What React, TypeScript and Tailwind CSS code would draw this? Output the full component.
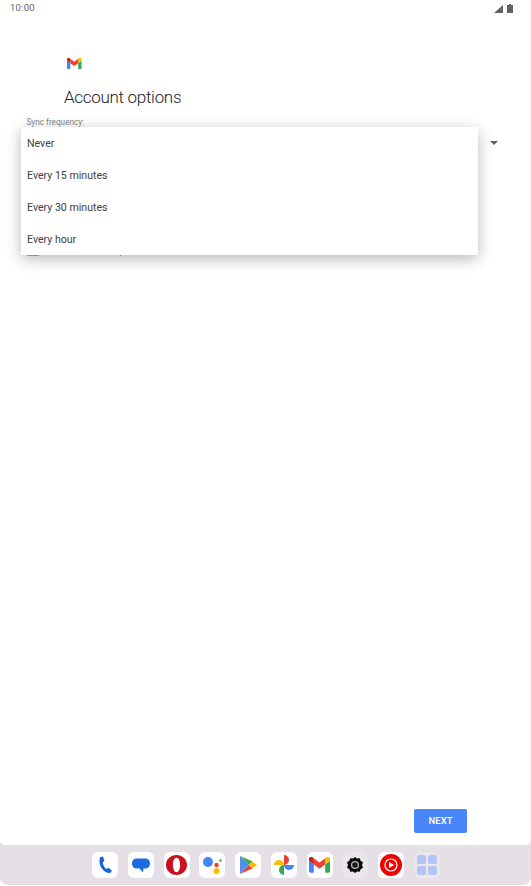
import type { ReactNode } from "react";

const GmailMark = ({ size = 16 }: { size?: number }) => (
  <svg width={size} height={size * 0.75} viewBox="0 0 24 18">
    <path d="M1.6 18H5.5V8.5L0 4.4V16.4C0 17.3.7 18 1.6 18Z" fill="#4285f4" />
    <path d="M18.5 18H22.4C23.3 18 24 17.3 24 16.4V4.4L18.5 8.5Z" fill="#34a853" />
    <path d="M18.5 1.4V8.5L24 4.4V2.2C24 .2 21.7-1 20.1.2Z" fill="#fbbc04" />
    <path d="M5.5 8.5V1.4L12 6.3L18.5 1.4V8.5L12 13.4Z" fill="#ea4335" />
    <path d="M0 2.2V4.4L5.5 8.5V1.4L3.9.2C2.3-1 0 .2 0 2.2Z" fill="#c5221f" />
  </svg>
);

const PhoneIcon = () => (
  <svg width="16" height="18" viewBox="0 0 16 18">
    <path
      d="M3 1.2 6 .6 7.4 5 5.6 6.6C6 9 7.4 11.6 9.4 13L11.6 11.8 15 14.8 13.2 17C7.4 17.6 .4 10 3 1.2Z"
      fill="#1a62d6"
    />
  </svg>
);

const MessagesIcon = () => (
  <svg width="20" height="18" viewBox="0 0 20 18">
    <path
      d="M5.5 2.5H14.5C20.5 2.5 20.5 12.5 14.5 12.5H12.5L12 16.5 8.5 12.5H5.5C-.5 12.5-.5 2.5 5.5 2.5Z"
      fill="#1a6de0"
    />
  </svg>
);

const OperaIcon = () => (
  <svg width="21" height="20" viewBox="0 0 21 20">
    <path
      fillRule="evenodd"
      d="M10.5 0C16.4 0 21 4.4 21 10S16.4 20 10.5 20 0 15.600 0 10 4.600 0 10.500 0ZM10.500 2.800C8.300 2.800 6.900 6 6.900 10S8.300 17.200 10.500 17.200 14.100 14 14.100 10 12.700 2.800 10.500 2.800Z"
      fill="#cc1020"
    />
  </svg>
);

const AssistantIcon = () => (
  <svg width="20" height="20" viewBox="0 0 20 20">
    <circle cx="6" cy="7" r="5" fill="#4285f4" />
    <circle cx="14.5" cy="10" r="2.2" fill="#ea4335" />
    <circle cx="14.5" cy="16" r="3" fill="#fbbc04" />
    <circle cx="18.5" cy="5.5" r="1.2" fill="#34a853" />
  </svg>
);

const PlayIcon = () => (
  <svg width="18" height="20" viewBox="0 0 18 20">
    <path d="M1 1V10H10Z" fill="#4a8ff0" />
    <path d="M1 1 10 10 13.5 6.5Z" fill="#34a853" />
    <path d="M1 19V10H10Z" fill="#5b8def" />
    <path d="M1 19 10 10 13.5 13.5Z" fill="#ea4335" />
    <path d="M10 10 13.5 6.5 18 10 13.5 13.5Z" fill="#fbbc04" />
  </svg>
);

const PhotosIcon = () => (
  <svg width="20" height="20" viewBox="0 0 20 20">
    <path d="M0 10A5 5 0 0 1 10 10Z" fill="#fbbc04" />
    <path d="M10 0A5 5 0 0 1 10 10Z" fill="#ea4335" />
    <path d="M20 10A5 5 0 0 1 10 10Z" fill="#4285f4" />
    <path d="M10 20A5 5 0 0 1 10 10Z" fill="#34a853" />
  </svg>
);

const SettingsIcon = () => (
  <svg width="16" height="16" viewBox="0 0 16 16">
    <path
      d="M8 0 10 1.6 12.8 1.2 13.6 3.8 16 5.2 15 8 16 10.8 13.6 12.2 12.8 14.8 10 14.4 8 16 6 14.4 3.2 14.8 2.4 12.2 0 10.8 1 8 0 5.2 2.4 3.8 3.2 1.2 6 1.6Z"
      fill="#0a0a0a"
    />
    <circle cx="8" cy="8" r="4" fill="#bdbdbd" />
    <circle cx="8" cy="8" r="2.8" fill="#1a1a1a" />
  </svg>
);

const MusicIcon = () => (
  <svg width="22" height="22" viewBox="0 0 22 22">
    <circle cx="11" cy="11" r="11" fill="#f20000" />
    <circle cx="11" cy="11" r="6" fill="none" stroke="#fff" strokeWidth="1.2" />
    <path d="M9 8 14 11 9 14Z" fill="#fff" />
  </svg>
);

const dockIcons = [
  { name: "phone", icon: <PhoneIcon /> },
  { name: "messages", icon: <MessagesIcon /> },
  { name: "opera", icon: <OperaIcon /> },
  { name: "assistant", icon: <AssistantIcon /> },
  { name: "play", icon: <PlayIcon /> },
  { name: "photos", icon: <PhotosIcon /> },
  { name: "gmail", icon: <GmailMark size={21} /> },
];

const frequencies = ["Never", "Every 15 minutes", "Every 30 minutes", "Every hour"];

const AppTile = ({ children, muted }: { children: ReactNode; muted?: boolean }) => (
  <div
    className={`flex h-[26px] w-[26px] items-center justify-center rounded-md ${
      muted ? "bg-[#e9e7ea]" : "bg-white"
    }`}
  >
    {children}
  </div>
);

export default function App() {
  return (
    <div className="h-[886px] w-[531px] overflow-hidden bg-white font-['Roboto',sans-serif] text-[#202124]">
      <div className="flex h-[885px] flex-col rounded-b-lg bg-[#e4e0e5]">
        <main className="relative flex flex-1 flex-col rounded-b-[5px] bg-white">
          <div className="flex h-[17px] items-center justify-between pl-[10px] pr-[18px] text-[9.5px] text-[#5f6368]">
            <span className="tracking-wide">10:00</span>
            <div className="flex items-center gap-[4.5px]">
              <svg width="9" height="8" viewBox="0 0 9 8">
                <path d="M9 0V8H0Z" fill="#5f6368" />
              </svg>
              <svg width="6" height="9" viewBox="0 0 6 9">
                <path d="M2 0H4V1H6V9H0V1H2Z" fill="#5f6368" />
              </svg>
            </div>
          </div>

          <div className="pl-[67px] pt-[41px]">
            <GmailMark size={14.5} />
          </div>
          <h1 className="pl-[64px] pt-[16px] text-[17px] leading-[24px] font-light tracking-[-0.3px] text-[#202124]">
            Account options
          </h1>
          <p className="pl-[26.5px] pt-[8px] text-[8.2px] leading-[10px] text-[#80868b]">
            Sync frequency:
          </p>

          <svg
            className="absolute left-[490px] top-[141px]"
            width="8"
            height="4"
            viewBox="0 0 8 4"
          >
            <path d="M0 0H8L4 4Z" fill="#5f6368" />
          </svg>

          {/* covered row peeking out under the menu */}
          <div className="absolute left-[27px] top-[254px] h-[2px] w-[12px] bg-[#9fb2f0]" />
          <div className="absolute left-[120px] top-[254px] h-[2px] w-px bg-[#9aa0a6]" />

          <ul className="absolute left-[21px] top-[127px] w-[457px] bg-white shadow-[0_4px_14px_rgba(0,0,0,0.28)]">
            {frequencies.map((label) => (
              <li
                key={label}
                className="flex h-[32px] items-center pl-[6px] pt-[1px] text-[10.6px] text-[#3c4043]"
              >
                {label}
              </li>
            ))}
          </ul>

          <div className="mt-auto flex justify-end pb-[12px] pr-[64px]">
            <button className="h-[24px] w-[53px] rounded-[2px] bg-[#4a86f7] text-[9.5px] font-medium text-white">
              NEXT
            </button>
          </div>
        </main>

        <footer className="flex h-[40px] items-center justify-center gap-[9.8px] pl-[1px]">
          {dockIcons.map((item) => (
            <AppTile key={item.name}>{item.icon}</AppTile>
          ))}
          <AppTile muted>
            <SettingsIcon />
          </AppTile>
          <AppTile>
            <MusicIcon />
          </AppTile>
          <AppTile muted>
            <div className="grid grid-cols-2 gap-[2px]">
              <span className="h-[9px] w-[9px] rounded-[2px] bg-[#b4c5f5]" />
              <span className="h-[9px] w-[9px] rounded-[2px] bg-[#b4c5f5]" />
              <span className="h-[9px] w-[9px] rounded-[2px] bg-[#b4c5f5]" />
              <span className="h-[9px] w-[9px] rounded-[2px] bg-[#b4c5f5]" />
            </div>
          </AppTile>
        </footer>
      </div>
    </div>
  );
}
